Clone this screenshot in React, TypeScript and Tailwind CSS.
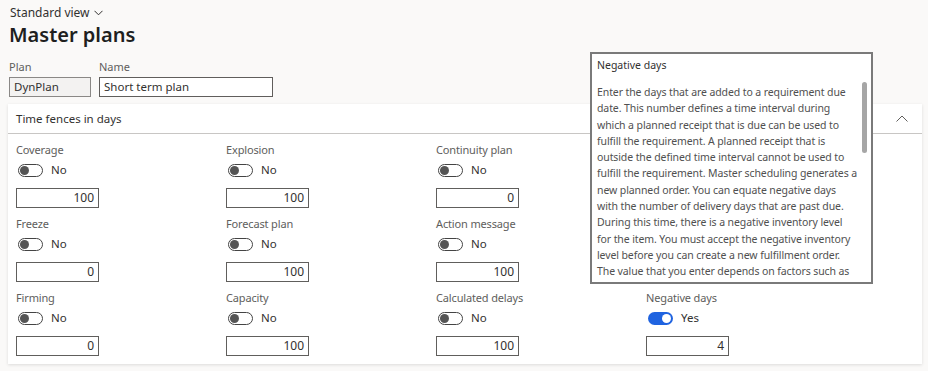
import React from 'react';

type Field = { label: string; on: boolean; value: string };

const fields: Field[] = [
  { label: 'Coverage', on: false, value: '100' },
  { label: 'Explosion', on: false, value: '100' },
  { label: 'Continuity plan', on: false, value: '0' },
  { label: '', on: false, value: '' },
  { label: 'Freeze', on: false, value: '0' },
  { label: 'Forecast plan', on: false, value: '100' },
  { label: 'Action message', on: false, value: '100' },
  { label: '', on: false, value: '' },
  { label: 'Firming', on: false, value: '0' },
  { label: 'Capacity', on: false, value: '100' },
  { label: 'Calculated delays', on: false, value: '100' },
  { label: 'Negative days', on: true, value: '4' },
];

const helpLines = [
  'Enter the days that are added to a requirement due',
  'date. This number defines a time interval during',
  'which a planned receipt that is due can be used to',
  'fulfill the requirement. A planned receipt that is',
  'outside the defined time interval cannot be used to',
  'fulfill the requirement. Master scheduling generates a',
  'new planned order. You can equate negative days',
  'with the number of delivery days that are past due.',
  'During this time, there is a negative inventory level',
  'for the item. You must accept the negative inventory',
  'level before you can create a new fulfillment order.',
  'The value that you enter depends on factors such as',
  'item lead time and the customer tolerance for delays.',
];

const Toggle: React.FC<{ on: boolean }> = ({ on }) => (
  <div className="flex items-center h-5 gap-2">
    {on ? (
      <span className="w-[25px] h-[13px] rounded-full bg-[#1f63e0] flex items-center justify-end px-[2px]">
        <span className="w-[9px] h-[9px] rounded-full bg-white" />
      </span>
    ) : (
      <span className="w-[25px] h-[13px] rounded-full border border-[#444] flex items-center px-[1px]">
        <span className="w-[9px] h-[9px] rounded-full bg-[#555]" />
      </span>
    )}
    <span className="text-[11.5px] text-[#323130]">{on ? 'Yes' : 'No'}</span>
  </div>
);

const App: React.FC = () => {
  return (
    <div
      className="relative h-[371px] w-[928px] overflow-hidden bg-[#faf9f8] text-[#323130]"
      style={{ fontFamily: '"Segoe UI", "Noto Sans", sans-serif' }}
    >
      {/* Page header */}
      <div className="px-[9px] pt-[4px]">
        <div className="flex items-center gap-[4px] pl-[1px] text-[12px] leading-[18px] text-[#323130]">
          <span>Standard view</span>
          <svg width="9" height="6" viewBox="0 0 9 6" fill="none" stroke="#323130" strokeWidth="1">
            <path d="M0.5 0.8 L4.5 4.8 L8.5 0.8" />
          </svg>
        </div>
        <h1 className="text-[20px] leading-[26px] font-semibold text-[#201f1e]">Master plans</h1>
        <div className="flex gap-[8px] mt-[12px]">
          <div className="flex flex-col">
            <span className="text-[11px] leading-[14px] text-[#605e5c]">Plan</span>
            <div className="mt-[3px] w-[82px] h-[20px] border border-[#8a8886] bg-[#f3f2f1] px-[4px] text-[11.5px] leading-[18px]">
              DynPlan
            </div>
          </div>
          <div className="flex flex-col">
            <span className="text-[11px] leading-[14px] text-[#605e5c]">Name</span>
            <div className="mt-[3px] w-[174px] h-[20px] border border-[#605e5c] bg-white px-[4px] text-[11.5px] leading-[18px]">
              Short term plan
            </div>
          </div>
        </div>
      </div>

      {/* Card */}
      <div className="mx-[8px] mt-[7px] w-[914px] bg-white shadow-[0_1px_3px_rgba(0,0,0,0.12)]">
        <div className="flex items-center justify-between h-[30px] border-b border-[#c8c6c4] pl-[8px] pr-[14px]">
          <span className="text-[11.5px] text-[#323130]">Time fences in days</span>
          <svg width="12" height="7" viewBox="0 0 12 7" fill="none" stroke="#605e5c" strokeWidth="1">
            <path d="M0.5 6.5 L6 1 L11.5 6.5" />
          </svg>
        </div>
        <div className="grid grid-cols-[210px_210px_210px_210px] pl-[8px] pt-[8px] pb-[8px] gap-y-[8px]">
          {fields.map((f, i) => (
            <div key={i} className="flex flex-col h-[66px]">
              {f.label && (
                <>
                  <span className="text-[11px] tracking-[-0.15px] leading-[16px] text-[#605e5c]">{f.label}</span>
                  <div className="mt-[2px] pl-[2px]">
                    <Toggle on={f.on} />
                  </div>
                  <div className="mt-[8px] w-[83px] h-[20px] border border-[#605e5c] bg-white pr-[4px] text-right text-[12px] leading-[18px] text-[#323130]">
                    {f.value}
                  </div>
                </>
              )}
            </div>
          ))}
        </div>
      </div>

      {/* Help tooltip */}
      <div className="absolute left-[590px] top-[52px] w-[283px] h-[232px] border-2 border-[#7a7a7a] bg-white overflow-hidden">
        <div className="px-[5px] pt-[3px] text-[10.5px] leading-[16px] text-[#323130]">Negative days</div>
        <div className="mt-[11px] px-[5px] text-[10.5px] tracking-[-0.1px] leading-[16.3px] text-[#505050]">
          {helpLines.map((l, i) => (
            <div key={i} className="whitespace-nowrap">
              {l}
            </div>
          ))}
        </div>
        <div className="absolute right-[4px] top-[28px] w-[5px] h-[71px] rounded-full bg-[#a6a6a6]" />
      </div>
    </div>
  );
};

export default App;
